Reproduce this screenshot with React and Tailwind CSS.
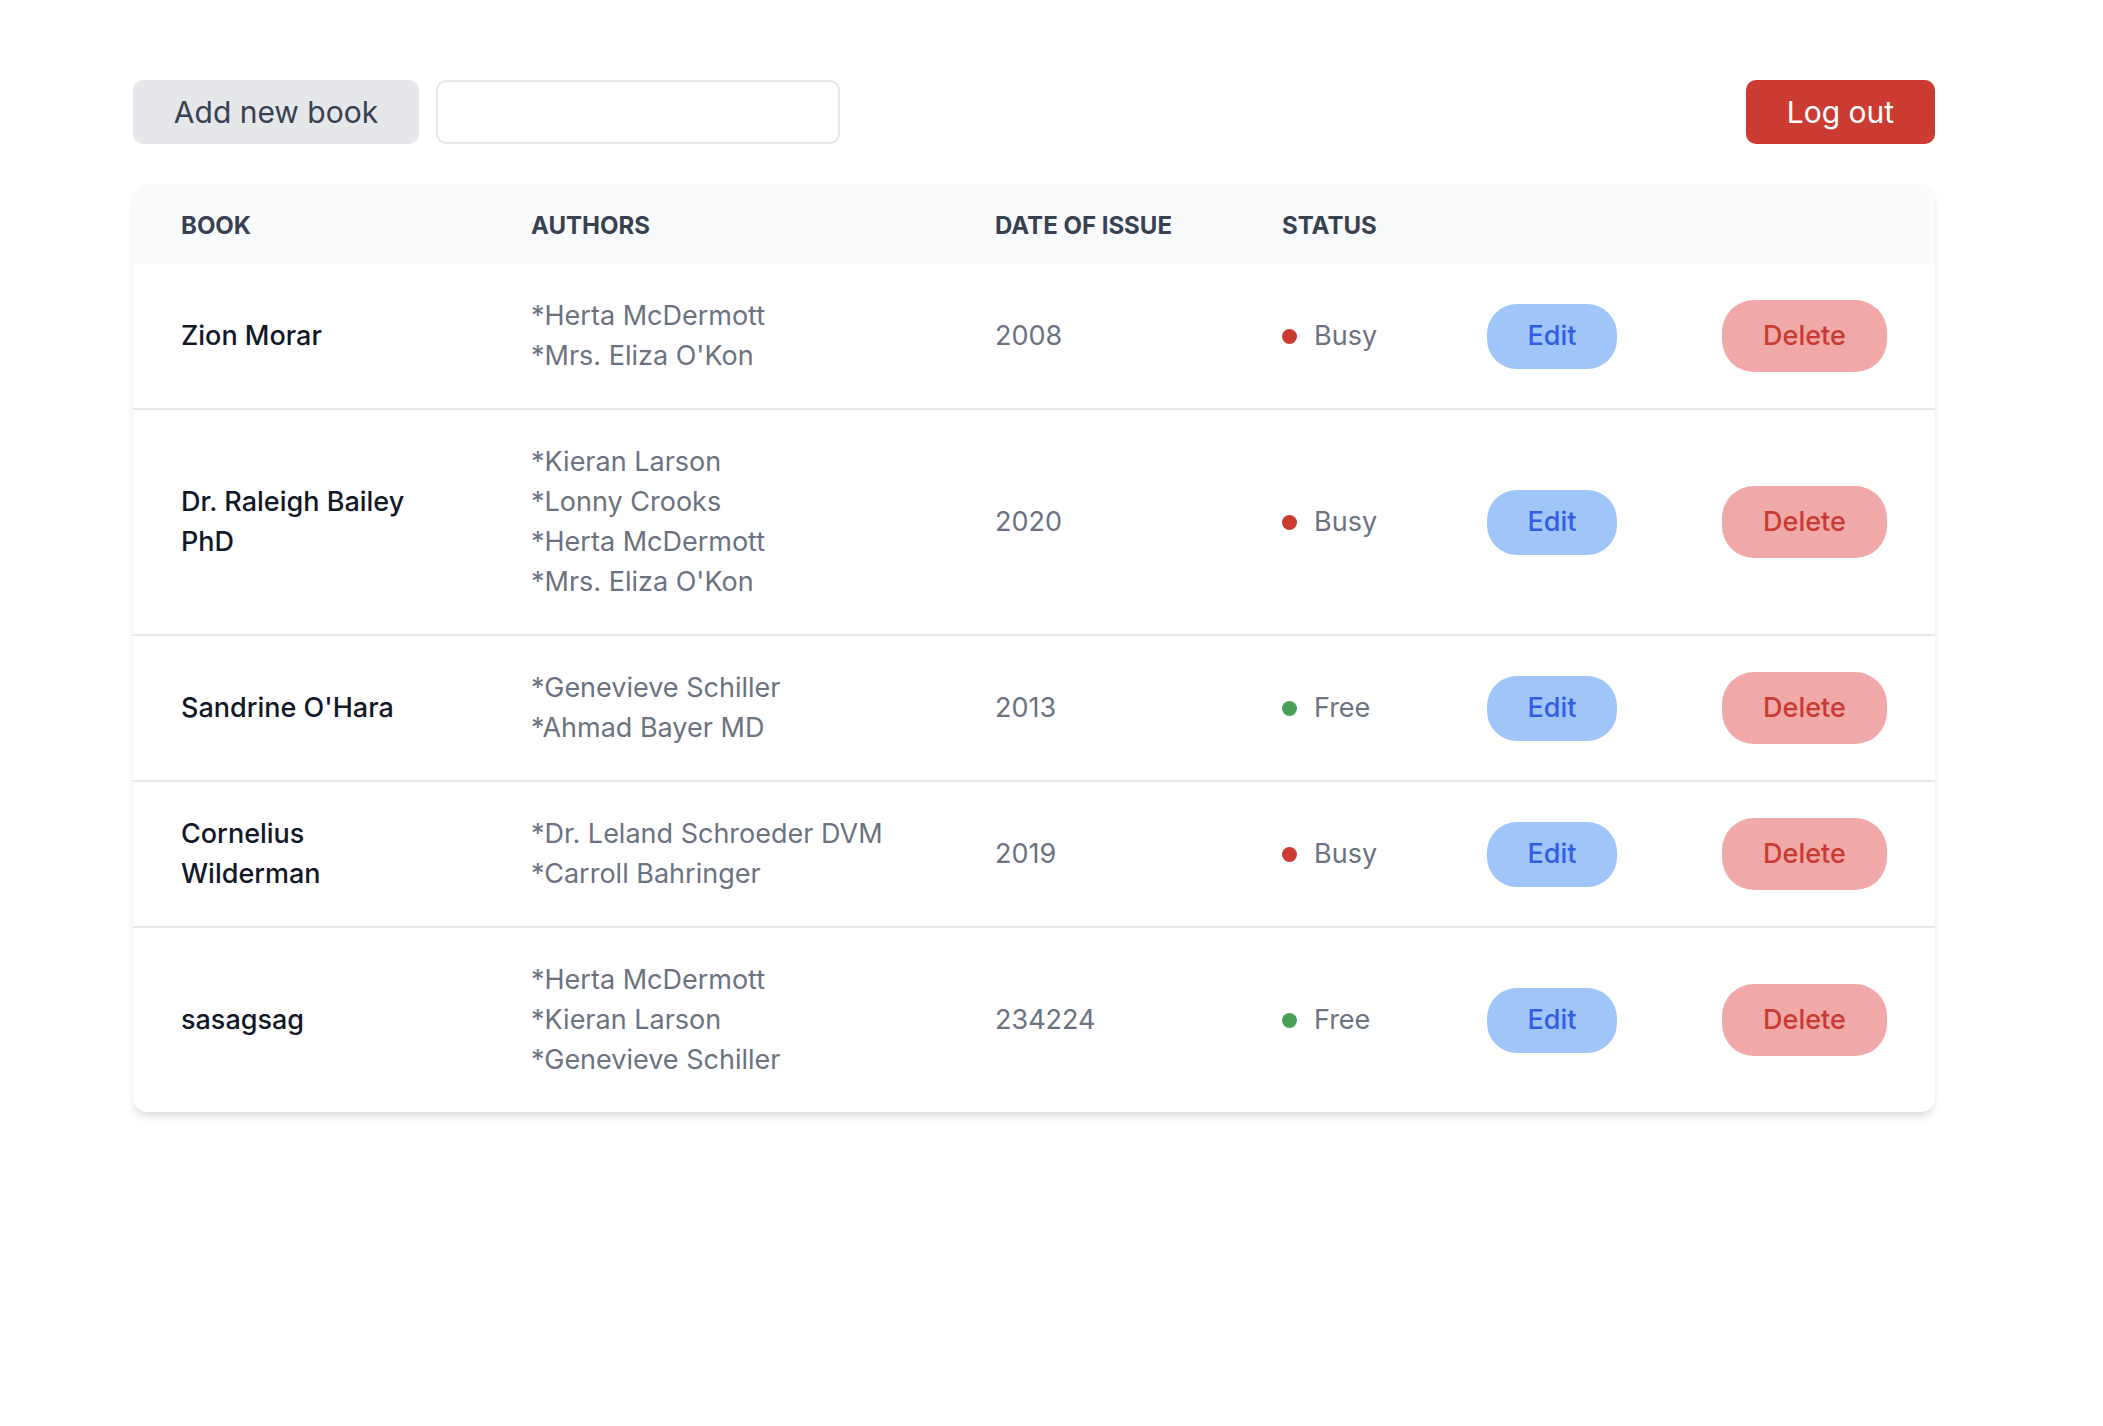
import React from "react";

const books = [
  { name: "Zion Morar", authors: ["Herta McDermott", "Mrs. Eliza O'Kon"], date: "2008", status: "Busy" },
  { name: "Dr. Raleigh Bailey PhD", authors: ["Kieran Larson", "Lonny Crooks", "Herta McDermott", "Mrs. Eliza O'Kon"], date: "2020", status: "Busy" },
  { name: "Sandrine O'Hara", authors: ["Genevieve Schiller", "Ahmad Bayer MD"], date: "2013", status: "Free" },
  { name: "Cornelius Wilderman", authors: ["Dr. Leland Schroeder DVM", "Carroll Bahringer"], date: "2019", status: "Busy" },
  { name: "sasagsag", authors: ["Herta McDermott", "Kieran Larson", "Genevieve Schiller"], date: "234224", status: "Free" },
];

export default function App() {
  return (
    <div
      className="min-h-screen bg-white pl-[133px] pt-[80px]"
      style={{ fontFamily: "Inter, 'Noto Sans', sans-serif" }}
    >
      <div className="w-[1802px]">
        <div className="flex items-center">
          <button className="h-[64px] w-[286px] rounded-[10px] bg-[#e5e7eb] text-[30px] text-[#374151] flex items-center justify-center">
            Add new book
          </button>
          <input
            className="ml-[17px] h-[64px] w-[404px] rounded-[10px] border-2 border-[#e5e7eb] bg-white outline-none"
            type="text"
          />
          <button className="ml-auto h-[64px] w-[189px] rounded-[10px] bg-[#cb3b32] text-[30px] text-white flex items-center justify-center">
            Log out
          </button>
        </div>

        <div className="mt-[40px] overflow-hidden rounded-[14px] bg-white shadow-[0_7px_10px_-2px_rgba(0,0,0,0.1),0_3px_7px_-3px_rgba(0,0,0,0.1)]">
          <table className="w-full table-fixed border-collapse">
            <colgroup>
              <col className="w-[350px]" />
              <col className="w-[464px]" />
              <col className="w-[287px]" />
              <col className="w-[205px]" />
              <col className="w-[235px]" />
              <col className="w-[261px]" />
            </colgroup>
            <thead>
              <tr className="bg-[#f9fafb] h-[80px]">
                <th className="px-[48px] pt-[3px] text-left text-[24px] font-bold uppercase text-[#374151]">Book</th>
                <th className="px-[48px] pt-[3px] text-left text-[24px] font-bold uppercase text-[#374151]">Authors</th>
                <th className="px-[48px] pt-[3px] text-left text-[24px] font-bold uppercase text-[#374151] whitespace-nowrap">Date of issue</th>
                <th className="px-[48px] pt-[3px] text-left text-[24px] font-bold uppercase text-[#374151]">Status</th>
                <th className="px-[48px]"></th>
                <th className="px-[48px]"></th>
              </tr>
            </thead>
            <tbody className="text-[27px] leading-[40px]">
              {books.map((b, i) => (
                <tr key={i} className={i < books.length - 1 ? "border-b-2 border-[#e5e7eb]" : ""}>
                  <td className="px-[48px] py-[32px] align-middle font-medium text-[#111827]">{b.name}</td>
                  <td className="px-[48px] py-[32px] align-middle text-[#6b7280] whitespace-nowrap">
                    {b.authors.map((a, j) => (
                      <div key={j}>*{a}</div>
                    ))}
                  </td>
                  <td className="px-[48px] py-[32px] align-middle text-[#6b7280]">{b.date}</td>
                  <td className="px-[48px] py-[32px] align-middle text-[#6b7280]">
                    <div className="flex items-center">
                      <span
                        className={
                          b.status === "Busy"
                            ? "h-[15px] w-[15px] rounded-full bg-[#cb3b32]"
                            : "h-[15px] w-[15px] rounded-full bg-[#4a9f56]"
                        }
                      />
                      <span className="ml-[17px]">{b.status}</span>
                    </div>
                  </td>
                  <td className="px-[48px] py-[32px] align-middle">
                    <button className="h-[65px] w-[130px] rounded-[30px] bg-[#a0c5f9] font-medium text-[#2f5fe3] flex items-center justify-center">
                      Edit
                    </button>
                  </td>
                  <td className="px-[48px] py-[32px] align-middle">
                    <button className="h-[72px] w-[165px] rounded-[32px] bg-[#f0a9a8] font-medium text-[#c93a32] flex items-center justify-center">
                      Delete
                    </button>
                  </td>
                </tr>
              ))}
            </tbody>
          </table>
        </div>
      </div>
    </div>
  );
}
